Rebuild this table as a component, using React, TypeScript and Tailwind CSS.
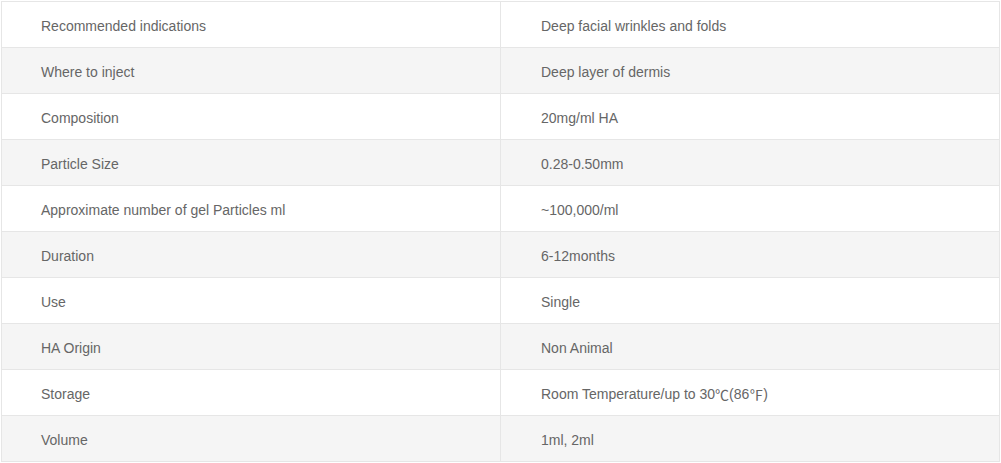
import type { ReactNode } from "react";

const cjk = (c: string) => (
  <span style={{ fontFamily: '"Noto Sans CJK SC", sans-serif' }}>{c}</span>
);

const rows: [string, ReactNode][] = [
  ["Recommended indications", "Deep facial wrinkles and folds"],
  ["Where to inject", "Deep layer of dermis"],
  ["Composition", "20mg/ml HA"],
  ["Particle Size", "0.28-0.50mm"],
  ["Approximate number of gel Particles ml", "~100,000/ml"],
  ["Duration", "6-12months"],
  ["Use", "Single"],
  ["HA Origin", "Non Animal"],
  [
    "Storage",
    <>
      Room Temperature/up to 30{cjk("℃")}(86{cjk("℉")})
    </>,
  ],
  ["Volume", "1ml, 2ml"],
];

const App = () => {
  return (
    <div className="bg-white w-[1001px] h-[463px] pt-px pl-px">
      <div
        className="w-[999px] border-l border-t border-[#e6e6e6] text-[14px] text-[#666666]"
        style={{ fontFamily: '"Liberation Sans", Arial, "Noto Sans CJK SC", sans-serif' }}
      >
        {rows.map(([label, value], i) => (
          <div
            key={label}
            className={`grid grid-cols-2 border-b border-[#e6e6e6] ${i % 2 === 1 ? "bg-[#f5f5f5]" : "bg-white"}`}
          >
            <div className="h-[45px] flex items-center pt-[4px] pl-[39px] border-r border-[#e6e6e6]">{label}</div>
            <div className="h-[45px] flex items-center pt-[4px] pl-[40px] border-r border-[#e6e6e6]">{value}</div>
          </div>
        ))}
      </div>
    </div>
  );
};

export default App;
